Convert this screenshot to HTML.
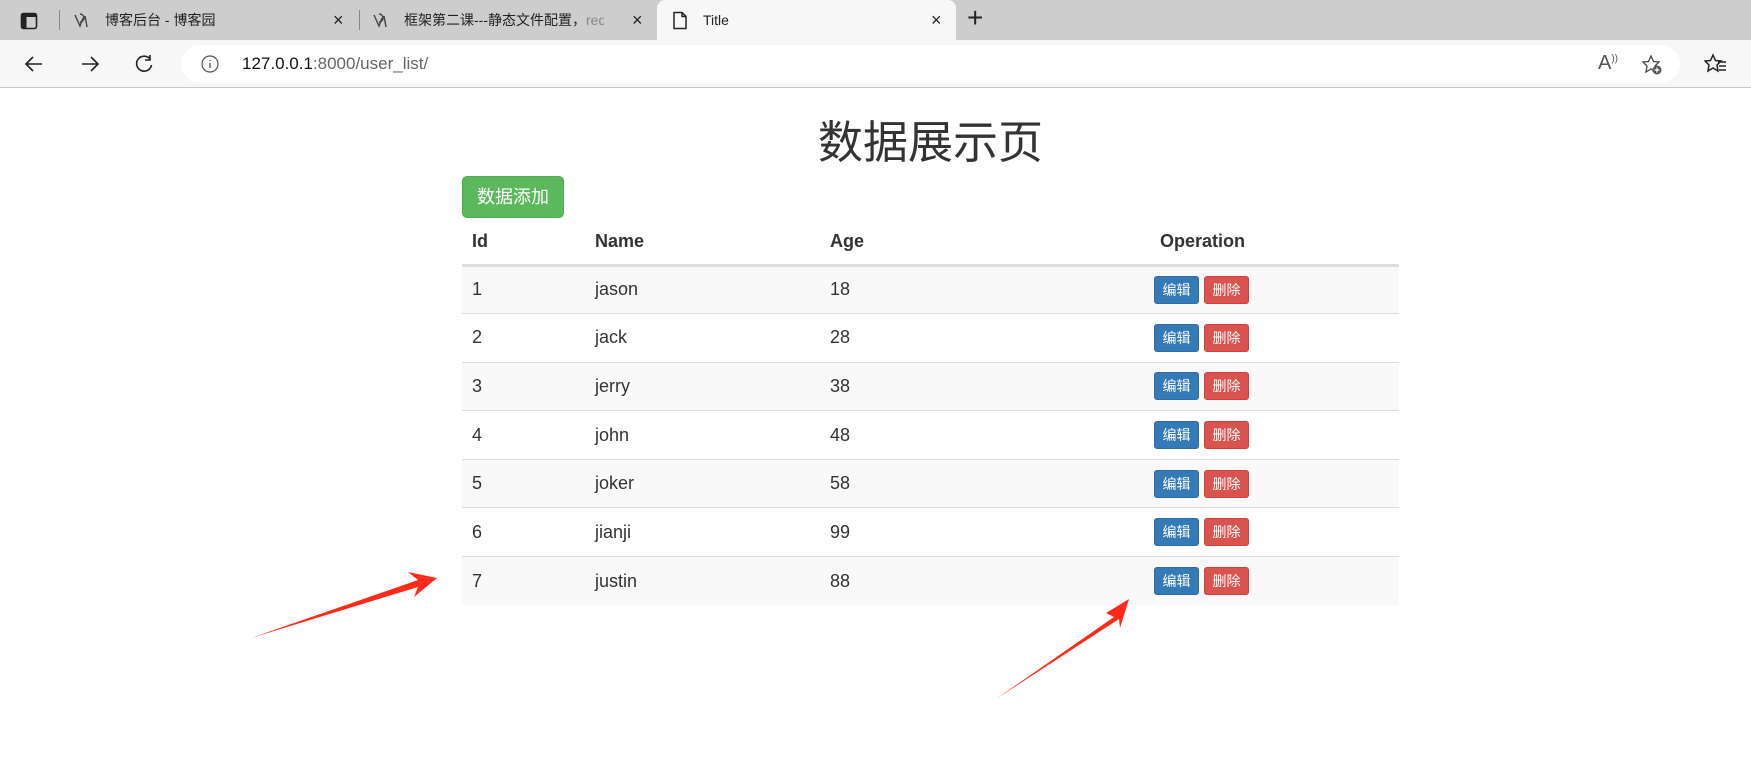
<!DOCTYPE html>
<html><head><meta charset="utf-8">
<style>
*{box-sizing:border-box;margin:0;padding:0}
body{width:1751px;height:780px;overflow:hidden;background:#fff;font-family:"Liberation Sans","Noto Sans CJK SC",sans-serif;color:#333;position:relative}
.tabbar{position:absolute;left:0;top:0;width:1751px;height:40px;background:#cdcdcd}
.tab{position:absolute;top:0;height:40px;font-size:14px;color:#222;line-height:40px}
.toolbar{position:absolute;left:0;top:40px;width:1751px;height:48px;background:#f7f7f7;border-bottom:1px solid #c8c8c8}
.addr{position:absolute;left:181px;top:5px;width:1499px;height:38px;background:#fff;border-radius:19px}
.abs{position:absolute}
h1{position:absolute;left:0;width:1861px;text-align:center;top:106px;font-size:45px;font-weight:normal;color:#333}
.add{position:absolute;left:462px;top:176px;width:102px;height:42px;background:#5cb85c;border:1px solid #4cae4c;border-radius:5px;color:#fff;font-size:18px;line-height:40px;text-align:center}
table{position:absolute;left:462px;top:220px;width:937px;border-collapse:collapse;font-size:18px}
th{text-align:left;font-weight:bold;height:45px;border-bottom:3px solid #ddd;padding-left:10px;vertical-align:middle}
td{height:48.6px;border-top:1px solid #ddd;padding-left:10px;vertical-align:middle}
tr.s td{background:#f9f9f9}
.b{display:inline-block;width:45px;height:28px;border-radius:3px;color:#fff;font-size:14px;line-height:26px;text-align:center;vertical-align:middle}
.e{background:#337ab7;border:1px solid #2e6da4}
.d{background:#d9534f;border:1px solid #d43f3a;margin-left:5px}
.op{padding-left:57px}
</style></head><body>
<div class="tabbar">
  <svg class="abs" style="left:20px;top:12px" width="18" height="18" viewBox="0 0 18 18"><rect x="1.5" y="1.5" width="15" height="15" rx="2" fill="none" stroke="#222" stroke-width="1.6"/><rect x="2" y="2" width="4.5" height="14" fill="#222"/><rect x="2" y="2" width="14" height="3" fill="#222"/></svg>
  <div class="abs" style="left:59px;top:10px;width:1px;height:20px;background:#888"></div>
  <div class="tab" style="left:61px;width:296px">
    <svg class="abs" style="left:12px;top:11px" width="18" height="18" viewBox="0 0 18 18"><path d="M2 4 L7 15 L10 7 M7 3 a4 4 0 1 1 0 8 M12 5 L14 16" fill="none" stroke="#444" stroke-width="1.4"/></svg>
    <span class="abs" style="left:44px">博客后台 - 博客园</span>
    <span class="abs" style="left:272px;font-size:18px">×</span>
  </div>
  <div class="abs" style="left:359px;top:10px;width:1px;height:20px;background:#888"></div>
  <div class="tab" style="left:360px;width:297px">
    <svg class="abs" style="left:12px;top:11px" width="18" height="18" viewBox="0 0 18 18"><path d="M2 4 L7 15 L10 7 M7 3 a4 4 0 1 1 0 8 M12 5 L14 16" fill="none" stroke="#444" stroke-width="1.4"/></svg>
    <span class="abs" style="left:44px;width:200px;overflow:hidden;white-space:nowrap">框架第二课---静态文件配置，<span style="color:#888">req</span></span>
    <span class="abs" style="left:272px;font-size:18px">×</span>
  </div>
  <div class="tab" style="left:657px;width:299px;background:#f7f7f7;border-radius:8px 8px 0 0">
    <svg class="abs" style="left:15px;top:11px" width="16" height="19" viewBox="0 0 16 19"><path d="M2 1.5 H10 L14 5.5 V17.5 H2 Z M10 1.5 V5.5 H14" fill="none" stroke="#222" stroke-width="1.5" stroke-linejoin="round"/></svg>
    <span class="abs" style="left:46px">Title</span>
    <span class="abs" style="left:274px;font-size:18px">×</span>
  </div>
  <span class="abs" style="left:967px;top:2px;font-size:28px;color:#222;font-weight:300">+</span>
</div>
<div class="toolbar">
  <svg class="abs" style="left:24px;top:14px" width="20" height="20" viewBox="0 0 20 20"><path d="M18 10 H3 M9 3 L2 10 L9 17" fill="none" stroke="#222" stroke-width="1.6"/></svg>
  <svg class="abs" style="left:80px;top:14px" width="20" height="20" viewBox="0 0 20 20"><path d="M2 10 H17 M11 3 L18 10 L11 17" fill="none" stroke="#222" stroke-width="1.6"/></svg>
  <svg class="abs" style="left:134px;top:14px" width="20" height="20" viewBox="0 0 20 20"><path d="M16 5 A7.5 7.5 0 1 0 17.5 11 M16 1 V6 H11" fill="none" stroke="#222" stroke-width="1.6"/></svg>
  <div class="addr">
    <svg class="abs" style="left:20px;top:10px" width="18" height="18" viewBox="0 0 18 18"><circle cx="9" cy="9" r="8" fill="none" stroke="#555" stroke-width="1.2"/><path d="M9 8 V13 M9 5 V6" stroke="#555" stroke-width="1.4"/></svg>
    <span class="abs" style="left:61px;top:9px;font-size:17px;color:#111">127.0.0.1<span style="color:#666">:8000/user_list/</span></span>
    <span class="abs" style="left:1417px;top:7px;font-size:20px;color:#555">A<sup style="font-size:10px">))</sup></span>
    <svg class="abs" style="left:1460px;top:9px" width="22" height="22" viewBox="0 0 22 22"><path d="M10 2 L12.5 7.5 L18 8 L14 12 L15 18 L10 15 L5 18 L6 12 L2 8 L7.5 7.5 Z" fill="none" stroke="#444" stroke-width="1.3"/><circle cx="16" cy="16" r="4.5" fill="#555"/><path d="M16 13.5 V18.5 M13.5 16 H18.5" stroke="#fff" stroke-width="1.3"/></svg>
  </div>
  <svg class="abs" style="left:1704px;top:13px" width="24" height="22" viewBox="0 0 24 22"><path d="M9 2 L11.5 7.5 L17 8 L13 12 L14 18 L9 15 L4 18 L5 12 L1 8 L6.5 7.5 Z" fill="none" stroke="#222" stroke-width="1.5"/><path d="M14 9 H22 M15 13 H22 M15 17 H22" stroke="#222" stroke-width="1.5"/></svg>
</div>

<h1>数据展示页</h1>
<div class="add">数据添加</div>
<table>
<tr><th style="width:123px">Id</th><th style="width:235px">Name</th><th style="width:277px">Age</th><th style="padding-left:63px">Operation</th></tr>
<tr class="s"><td>1</td><td>jason</td><td>18</td><td class="op"><span class="b e">编辑</span><span class="b d">删除</span></td></tr>
<tr><td>2</td><td>jack</td><td>28</td><td class="op"><span class="b e">编辑</span><span class="b d">删除</span></td></tr>
<tr class="s"><td>3</td><td>jerry</td><td>38</td><td class="op"><span class="b e">编辑</span><span class="b d">删除</span></td></tr>
<tr><td>4</td><td>john</td><td>48</td><td class="op"><span class="b e">编辑</span><span class="b d">删除</span></td></tr>
<tr class="s"><td>5</td><td>joker</td><td>58</td><td class="op"><span class="b e">编辑</span><span class="b d">删除</span></td></tr>
<tr><td>6</td><td>jianji</td><td>99</td><td class="op"><span class="b e">编辑</span><span class="b d">删除</span></td></tr>
<tr class="s"><td>7</td><td>justin</td><td>88</td><td class="op"><span class="b e">编辑</span><span class="b d">删除</span></td></tr>
</table>
<svg class="abs" style="left:0;top:0" width="1751" height="780">
<polygon points="251,638 418,580 408,572 437,578 414,597 418,587" fill="#ff2a1a"/>
<polygon points="996,699 1114,617 1106,613 1129,599 1120,628 1119,619" fill="#ff2a1a"/>
</svg>
</body></html>
